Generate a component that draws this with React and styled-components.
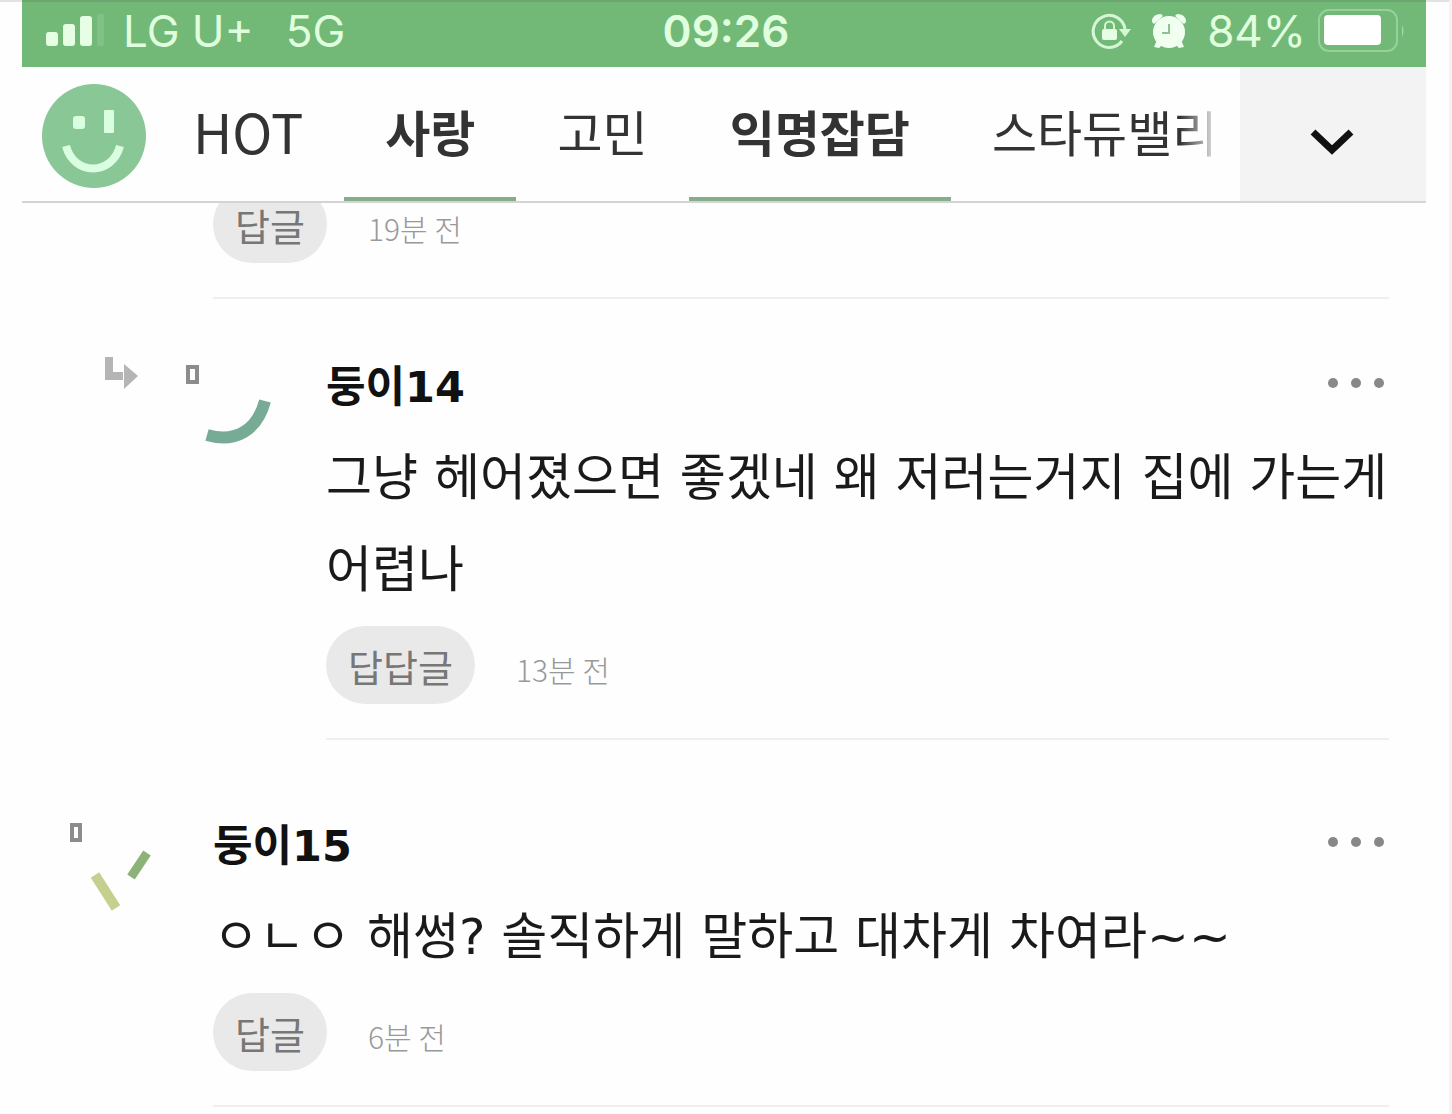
import React, { useState } from 'react';
import styled, { createGlobalStyle } from 'styled-components';

const GlobalStyle = createGlobalStyle`
  * {
    box-sizing: border-box;
  }
  body {
    margin: 0;
    background: #fefefe;
    font-family: 'DejaVu Sans', 'Noto Sans CJK KR', sans-serif;
    color: #1a1a1a;
  }
  button {
    border: 0;
    padding: 0;
    background: none;
    color: inherit;
    font-family: inherit;
    cursor: pointer;
  }
  svg {
    display: block;
    flex: none;
  }
`;

const Page = styled.div`
  min-height: 100vh;
  padding: 0 23px 0 22px;
  border-right: 3px solid #f3f3f3;
  box-shadow: inset 0 2px #e2e2e2;
`;

const Header = styled.header`
  position: relative;
  z-index: 1;
  background: #fefefe;
`;

const StatusBar = styled.div`
  display: grid;
  grid-template-columns: 1fr auto 1fr;
  align-items: center;
  height: 67px;
  padding: 0 20px 8px 24px;
  border-top: 2px solid #6ca671;
  background: #72b978;
  color: #e0ffdf;
  font-family: Inter, 'Liberation Sans', sans-serif;
  font-size: 44px;
`;

const StatusLeft = styled.div`
  display: flex;
  align-items: center;
  white-space: nowrap;
`;

const Carrier = styled.span`
  margin: 0 32px 0 19px;
`;

const Clock = styled.time`
  font-weight: 600;
`;

const StatusRight = styled.div`
  display: flex;
  align-items: center;
  justify-content: flex-end;
  gap: 20px;
`;

const Battery = styled.div`
  display: flex;
  align-items: center;
  gap: 12px;
`;

const Nav = styled.nav`
  display: flex;
  align-items: stretch;
  height: 136px;
  border-bottom: 2px solid #d4d4d4;
`;

const Logo = styled.a`
  display: flex;
  align-items: center;
  padding: 4px 5px 0 19px;
`;

const Tabs = styled.div`
  display: flex;
  flex: 1;
  min-width: 0;
  overflow: hidden;
  mask-image: linear-gradient(
    to right,
    #000 calc(100% - 60px),
    transparent calc(100% - 20px)
  );
`;

const Tab = styled.button`
  flex: none;
  padding: 0 41px 4px;
  border-bottom: 4px solid ${(props) => (props.$active ? '#86ac89' : 'transparent')};
  color: #333;
  font-family: 'Noto Sans CJK KR', sans-serif;
  font-size: ${(props) => (props.$large ? '54px' : '49px')};
  font-weight: ${(props) => (props.$active ? 700 : 400)};
  white-space: nowrap;
`;

const MoreTabs = styled.button`
  display: flex;
  align-items: center;
  justify-content: center;
  width: 186px;
  padding-top: 16px;
  background: #f3f3f3;
`;

/* The list is scrolled a little under the header. */
const CommentList = styled.main`
  margin-top: -18px;
`;

const Comment = styled.article`
  display: flex;
  padding: ${(props) => (props.$reply ? '56px 37px 0 80px' : '74px 37px 0 38px')};

  &:first-child {
    padding-top: 0;
  }
`;

const ReplyMark = styled.div`
  width: 71px;
`;

const Avatar = styled.div`
  flex: none;
  width: 153px;
`;

const Content = styled.div`
  flex: 1;
  min-width: 0;
  padding-bottom: 34px;
  border-bottom: 2px solid #efefef;
`;

const NameRow = styled.div`
  display: flex;
  align-items: center;
  justify-content: space-between;
  height: 60px;
  padding-bottom: 4px;
`;

const Name = styled.h2`
  margin: 0;
  color: #111;
  font-size: 43px;
  font-weight: 700;
`;

const Text = styled.p`
  margin: 17px 0 10px;
  font-size: 50px;
  line-height: 92px;
  word-break: keep-all;
`;

const Meta = styled.div`
  display: flex;
  align-items: baseline;
  gap: 41px;
  font-family: 'Noto Sans CJK KR', sans-serif;
`;

const ReplyButton = styled.button`
  height: 78px;
  padding: 0 22px;
  border-radius: 39px;
  background: #e9e9e9;
  color: #777;
  font-size: 38px;
`;

const Ago = styled.span`
  color: #999;
  font-size: 30px;
  font-weight: 300;
`;

const SignalIcon = () => (
  <svg width='58' height='34' viewBox='0 0 58 34' fill='#e6ffe4'>
    <rect x='0' y='18' width='12' height='14' rx='3' />
    <rect x='17' y='10' width='12' height='22' rx='3' />
    <rect x='34' y='2' width='12' height='30' rx='3' />
    <rect x='51' y='0' width='7' height='32' rx='2' opacity='0.12' />
  </svg>
);

const RotationLockIcon = () => (
  <svg width='40' height='38' viewBox='0 0 40 38'>
    <path
      d='M31 29A16 16 0 1 1 34 17'
      fill='none'
      stroke='#d5f7d5'
      strokeWidth='3'
    />
    <path d='M28 17h12l-6 8z' fill='#d5f7d5' />
    <rect x='11' y='17' width='15' height='11' rx='2' fill='#e6ffe4' />
    <path d='M14 18v-4a4 4 0 0 1 9 0v4' fill='none' stroke='#d5f7d5' strokeWidth='2' />
  </svg>
);

const AlarmIcon = () => (
  <svg width='36' height='38' viewBox='0 0 36 38'>
    <g fill='#f0fff0'>
      <circle cx='18' cy='20' r='16' />
      <path d='M1 10q0-8 9-8l2 2-9 8zM35 10q0-8-9-8l-2 2 9 8z' />
      <path d='M6 28l5 5-3 3-5-1zM30 28l-5 5 3 3 5-1z' />
    </g>
    <path d='M18 12v9h-7' fill='none' stroke='#8cc391' strokeWidth='2' />
  </svg>
);

const BatteryIcon = () => (
  <svg width='88' height='44' viewBox='0 0 88 44'>
    <rect
      x='1'
      y='1'
      width='78'
      height='41'
      rx='10'
      fill='none'
      stroke='#96d19a'
      strokeWidth='2'
    />
    <rect x='6' y='6' width='57' height='30' rx='4' fill='#fff' />
    <path d='M84 16q3 6 0 12z' fill='#a3dba6' />
  </svg>
);

const SmileLogo = () => (
  <svg width='106' height='106' viewBox='0 0 106 106'>
    <circle cx='53' cy='53' r='52' fill='#89c796' />
    <g fill='#d9ffe0'>
      <rect x='32' y='33' width='12' height='13' rx='3' />
      <rect x='63' y='27' width='10' height='23' rx='1' />
    </g>
    <path
      d='M25 63C33 93 71 93 79 63'
      fill='none'
      stroke='#d9ffe0'
      strokeWidth='8'
    />
  </svg>
);

const ChevronIcon = () => (
  <svg width='46' height='30' viewBox='0 0 46 30'>
    <path
      d='M3 5l19 18L41 5'
      fill='none'
      stroke='#111'
      strokeWidth='7'
    />
  </svg>
);

const ReplyArrowIcon = () => (
  <svg width='40' height='40' viewBox='0 0 40 40'>
    <path d='M7 2v19h14' fill='none' stroke='#b5b5b5' strokeWidth='8' />
    <path d='M22 9l14 12-14 13z' fill='#b5b5b5' />
  </svg>
);

const DotsIcon = () => (
  <svg width='64' height='14' viewBox='0 0 64 14' fill='#888'>
    <circle cx='8' cy='7' r='5' />
    <circle cx='31' cy='7' r='5' />
    <circle cx='54' cy='7' r='5' />
  </svg>
);

const AvatarIcon = ({ children }) => (
  <svg width='110' height='110' viewBox='0 0 110 110' fill='none'>
    {children}
  </svg>
);

const avatars = {
  arc: (
    <AvatarIcon>
      <rect x='15' y='12' width='9' height='15' stroke='#8c8c8c' strokeWidth='4' />
      <path d='M34 80C62 88 84 76 92 46' stroke='#78ab96' strokeWidth='12' />
    </AvatarIcon>
  ),
  sticks: (
    <AvatarIcon>
      <rect x='12' y='11' width='8' height='15' stroke='#8c8c8c' strokeWidth='4' />
      <path d='M35 61l21 33' stroke='#c5d08e' strokeWidth='10' />
      <path d='M87 39L71 63' stroke='#8cb377' strokeWidth='9' />
    </AvatarIcon>
  ),
};

const tabs = [
  { label: 'HOT', large: true },
  { label: '사랑', active: true },
  { label: '고민' },
  { label: '익명잡담', active: true },
  { label: '스타듀밸리' },
];

const comments = [
  { id: 13, action: '답글', ago: '19분 전' },
  {
    id: 14,
    reply: true,
    avatar: 'arc',
    name: '둥이14',
    text: '그냥 헤어졌으면 좋겠네 왜 저러는거지 집에 가는게 어렵나',
    action: '답답글',
    ago: '13분 전',
  },
  {
    id: 15,
    avatar: 'sticks',
    name: '둥이15',
    text: 'ㅇㄴㅇ 해썽? 솔직하게 말하고 대차게 차여라~~',
    action: '답글',
    ago: '6분 전',
  },
];

const App = () => {
  const [open, setOpen] = useState(false);

  return (
    <>
      <GlobalStyle />
      <Page>
        <Header>
          <StatusBar>
            <StatusLeft>
              <SignalIcon />
              <Carrier>LG U+</Carrier>
              <span>5G</span>
            </StatusLeft>
            <Clock>09:26</Clock>
            <StatusRight>
              <RotationLockIcon />
              <AlarmIcon />
              <Battery>
                <span>84%</span>
                <BatteryIcon />
              </Battery>
            </StatusRight>
          </StatusBar>
          <Nav>
            <Logo href='#' aria-label='홈'>
              <SmileLogo />
            </Logo>
            <Tabs>
              {tabs.map((tab) => (
                <Tab key={tab.label} $active={tab.active} $large={tab.large}>
                  {tab.label}
                </Tab>
              ))}
            </Tabs>
            <MoreTabs
              aria-label='더보기'
              aria-expanded={open}
              onClick={() => setOpen(!open)}
            >
              <ChevronIcon />
            </MoreTabs>
          </Nav>
        </Header>

        <CommentList>
          {comments.map((comment) => (
            <Comment key={comment.id} $reply={comment.reply}>
              {comment.reply && (
                <ReplyMark>
                  <ReplyArrowIcon />
                </ReplyMark>
              )}
              <Avatar>{avatars[comment.avatar]}</Avatar>
              <Content>
                {comment.name && (
                  <>
                    <NameRow>
                      <Name>{comment.name}</Name>
                      <button aria-label='메뉴'>
                        <DotsIcon />
                      </button>
                    </NameRow>
                    <Text>{comment.text}</Text>
                  </>
                )}
                <Meta>
                  <ReplyButton>{comment.action}</ReplyButton>
                  <Ago>{comment.ago}</Ago>
                </Meta>
              </Content>
            </Comment>
          ))}
        </CommentList>
      </Page>
    </>
  );
};

export default App;
